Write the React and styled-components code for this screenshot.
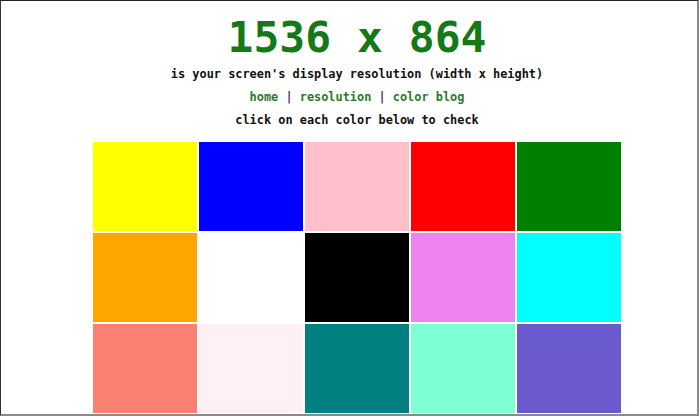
import styled, { createGlobalStyle } from 'styled-components'

const GlobalStyle = createGlobalStyle`
  html, body {
    margin: 0;
    padding: 0;
    background: #ffffff;
  }
`

const Frame = styled.div`
  box-sizing: border-box;
  width: 699px;
  height: 416px;
  overflow: hidden;
  padding-left: 16px;
  border-top: 1px solid #222;
  border-left: 1px solid #333;
  border-right: 2px solid #8a8a8a;
  border-bottom: 2px solid #8a8a8a;
  background: #fff;
  display: flex;
  flex-direction: column;
  align-items: center;
  font-family: "DejaVu Sans Mono", "Liberation Mono", monospace;
  color: #111;
`

const Title = styled.h1`
  margin: 14px 0 0;
  font-size: 43px;
  line-height: 44px;
  font-weight: bold;
  color: #137a17;
`

const Line = styled.p`
  margin: ${props => props.top || 0}px 0 0;
  font-size: 11.9px;
  line-height: 14px;
  font-weight: 600;
  color: ${props => props.green ? '#2a7a2a' : '#111'};
`

const Sep = styled.span`
  color: #444;
`

const Grid = styled.div`
  margin-top: 15px;
  display: grid;
  grid-template-columns: repeat(5, 104px);
  grid-auto-rows: 89px;
  gap: 2px 1.8px;
`

const Swatch = styled.div`
  background: ${props => props.color};
  cursor: pointer;
`

const colors = [
  'yellow', 'blue', 'pink', 'red', 'green',
  'orange', 'white', 'black', 'violet', 'cyan',
  'salmon', 'lavenderblush', 'teal', 'aquamarine', 'slateblue',
]

export default function App() {
  return (
    <>
      <GlobalStyle />
      <Frame>
        <Title>1536 x 864</Title>
        <Line top={8}>is your screen's display resolution (width x height)</Line>
        <Line top={9} green>home <Sep>|</Sep> resolution <Sep>|</Sep> color blog</Line>
        <Line top={9}>click on each color below to check</Line>
        <Grid>
          {colors.map(c => <Swatch key={c} color={c} />)}
        </Grid>
      </Frame>
    </>
  )
}
